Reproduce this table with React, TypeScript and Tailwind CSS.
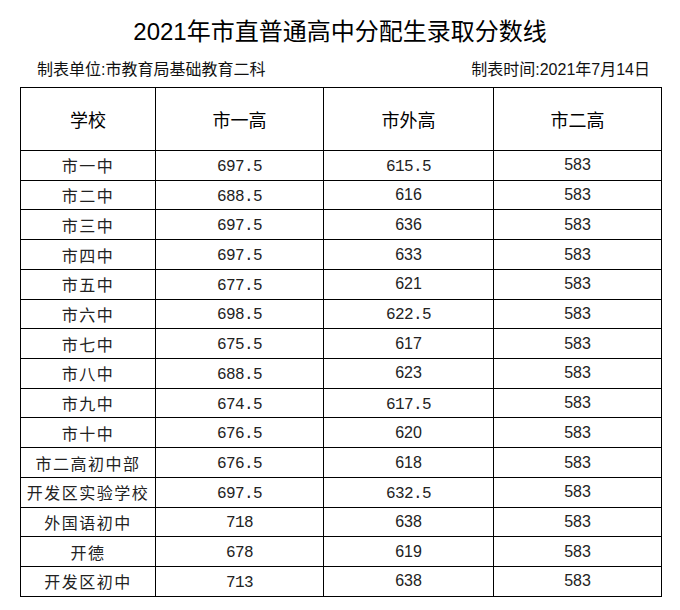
const rows: [string, string, string, string][] = [
  ["市一中", "697.5", "615.5", "583"],
  ["市二中", "688.5", "616", "583"],
  ["市三中", "697.5", "636", "583"],
  ["市四中", "697.5", "633", "583"],
  ["市五中", "677.5", "621", "583"],
  ["市六中", "698.5", "622.5", "583"],
  ["市七中", "675.5", "617", "583"],
  ["市八中", "688.5", "623", "583"],
  ["市九中", "674.5", "617.5", "583"],
  ["市十中", "676.5", "620", "583"],
  ["市二高初中部", "676.5", "618", "583"],
  ["开发区实验学校", "697.5", "632.5", "583"],
  ["外国语初中", "718", "638", "583"],
  ["开德", "678", "619", "583"],
  ["开发区初中", "713", "638", "583"],
];

const sans = "font-['Liberation_Sans','Noto_Sans_CJK_SC',sans-serif]";
const cjk = "font-['Noto_Sans_CJK_SC',sans-serif]";
const mono = "font-['Liberation_Mono','Noto_Sans_CJK_SC',monospace]";

export default function App() {
  return (
    <div className="w-[680px] h-[610px] bg-white text-black overflow-hidden">
      {/* Title */}
      <div className={`pt-[14px] h-[52px] text-center text-[24px] leading-[36px] ${sans}`}>
        2021年市直普通高中分配生录取分数线
      </div>

      {/* Meta line */}
      <div className={`flex justify-between items-center h-[35px] pl-[37px] pr-[30px] text-[16px] text-[#111] ${sans}`}>
        <span>制表单位:市教育局基础教育二科</span>
        <span>制表时间:2021年7月14日</span>
      </div>

      {/* Table */}
      <div className="pl-[20px]">
        <table className="border-collapse border border-black">
          <thead>
            <tr className="h-[63px]">
              <th className={`w-[135px] border border-black font-normal text-[18px] ${cjk}`}>学校</th>
              <th className={`w-[168px] border border-black font-normal text-[18px] ${cjk}`}>市一高</th>
              <th className={`w-[170px] border border-black font-normal text-[18px] ${cjk}`}>市外高</th>
              <th className={`w-[168px] border border-black font-normal text-[18px] ${cjk}`}>市二高</th>
            </tr>
          </thead>
          <tbody>
            {rows.map((r, i) => (
              <tr key={i} className="h-[29.73px]">
                <td className={`border border-black text-center text-[16px] tracking-[1.5px] text-[#222] leading-none ${cjk}`}>
                  {r[0]}
                </td>
                <td className={`border border-black text-center text-[16px] tracking-[-0.6px] text-[#222] leading-none pt-[3px] ${mono}`}>
                  {r[1]}
                </td>
                <td
                  className={`border border-black text-center text-[#222] leading-none ${
                    r[2].includes(".") ? `text-[16px] tracking-[-0.6px] pt-[3px] ${mono}` : `text-[16px] ${sans}`
                  }`}
                >
                  {r[2]}
                </td>
                <td className={`border border-black text-center text-[16px] text-[#222] leading-none ${sans}`}>
                  {r[3]}
                </td>
              </tr>
            ))}
          </tbody>
        </table>
      </div>
    </div>
  );
}
